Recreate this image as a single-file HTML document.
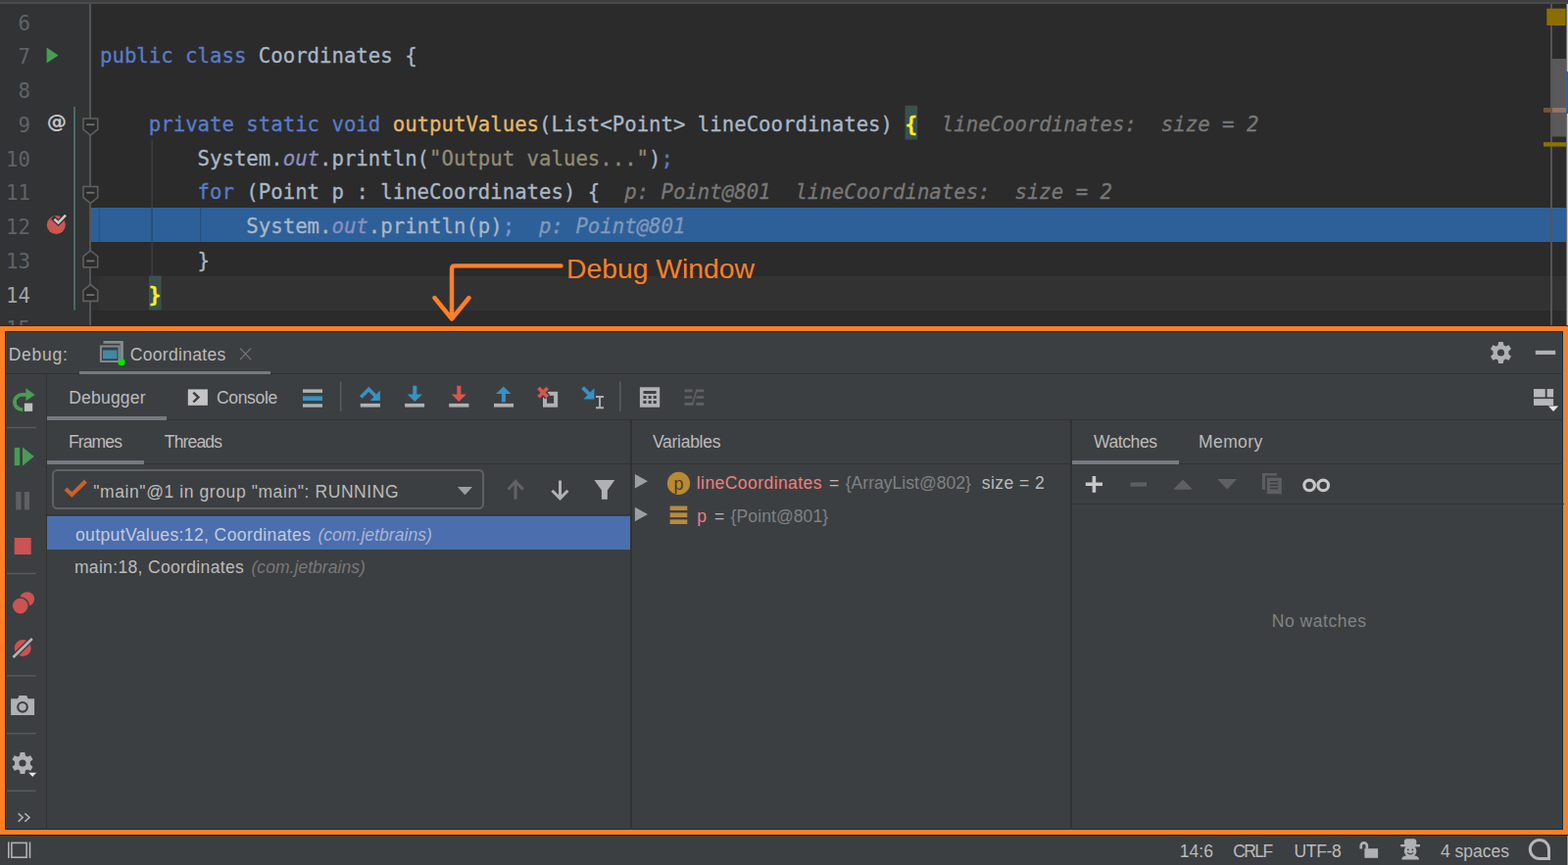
<!DOCTYPE html>
<html lang="en">
<head>
<meta charset="utf-8">
<title>Debug Window</title>
<style>
*{box-sizing:border-box;margin:0;padding:0}
html,body{width:1600px;height:883px;overflow:hidden;background:#2b2b2b}
body{position:relative;font-family:"Liberation Sans",sans-serif;color:#bbbbbb}
.abs{position:absolute}
/* ---------- editor ---------- */
#topstrip{left:0;top:0;width:1600px;height:4px;background:linear-gradient(#3c3f41 0,#3c3f41 2px,#4a4a4a 2px,#4a4a4a 4px)}
#gutter{left:0;top:4px;width:91px;height:330px;background:#313335}
#gutline{left:91px;top:4px;width:2px;height:330px;background:#555555}
.ln,.code{position:absolute;font-family:"DejaVu Sans Mono","Liberation Mono",monospace;font-size:20.68px;line-height:34.75px;height:34.75px;white-space:pre}
.ln.cur{color:#a4a3a3}
.ln{left:0;width:31px;margin-top:3px;text-align:right;color:#606366}
.code{left:102px;margin-top:2px;color:#a9b7c6;-webkit-text-stroke:0.3px}
.kw{color:#587ccb}
.fn{color:#e6b866}
.st{color:#8f8b74}
.fld{color:#8b8fc3;font-style:italic}
.hint{color:#787878;font-style:italic}
.kw2{color:#7a94d6}
.hint2{color:#8199ba;font-style:italic}
.brace{color:#ffef28;font-weight:bold}
#execline{left:93px;top:212px;width:1505px;height:35px;background:#2d6099}
#caretrow{left:93px;top:282px;width:1505.5px;height:35px;background:#323232}
#at{left:46px;top:110.6px;width:24px;text-align:center;font:bold 20.3px/26px "DejaVu Sans","Liberation Sans",sans-serif;color:#c3c5c7}
#annot{left:578px;top:258px;font:28.3px/32px "Liberation Sans",sans-serif;color:#ff7f27;white-space:pre}
/* ---------- debug panel ---------- */
#orange{left:0;top:333px;width:1600px;height:519px;border:5px solid #ff7f27;background:#3c3f41;box-shadow:0 0 0 0.9px #06303f,inset 0 0 0 0.9px #06303f}
#status{left:0;top:853px;width:1600px;height:30px;background:#3c3f41}
.ui{position:absolute;font-size:17.5px;line-height:22px;white-space:pre;color:#bbbbbb}
.hl{position:absolute;background:#323232}
.ul{position:absolute;background:#747a80}
</style>
</head>
<body>
<!-- editor -->
<div class="abs" id="topstrip"></div>
<div class="abs" id="gutter"></div>
<div class="abs" id="gutline"></div>
<div class="abs" id="execline"></div>
<div class="abs" id="caretrow"></div>
<svg class="abs" id="edsvg" style="left:0;top:0" width="1600" height="334" viewBox="0 0 1600 334">
<rect x="923.5" y="107.75" width="12.6" height="34.75" fill="#3b514d"/>
<rect x="152" y="281.5" width="12.6" height="35" fill="#3b514d"/>
<!-- indent guides -->
<rect x="154.5" y="142.5" width="1.2" height="139" fill="#424242"/>
<rect x="204" y="212" width="1.2" height="35" fill="#25507f"/>
<rect x="154.5" y="212" width="1.2" height="35" fill="#27517f"/>
<rect x="100.7" y="212" width="1.1" height="35" fill="#27548a"/>
<rect x="93" y="282" width="8" height="35" fill="#2f2f2f"/>
<!-- vcs line -->
<rect x="75" y="109" width="2" height="207.5" fill="#4c6a64"/>
<!-- run triangle -->
<path d="M47.6 48.6 L59.6 56.5 L47.6 64.4 Z" fill="#499c54"/>
<!-- breakpoint -->
<circle cx="57.3" cy="229.6" r="9.5" fill="#cd5651"/>
<path d="M55.4 223.6 L59.5 227.4 L67 219.7" fill="none" stroke="#2e3133" stroke-width="5" stroke-linecap="square"/>
<path d="M55.4 223.6 L59.5 227.4 L67 219.7" fill="none" stroke="#c9c9c9" stroke-width="2.6"/>
<!-- fold markers -->
<g fill="#2b2b2b" stroke="#606060" stroke-width="1.6">
<path d="M85 121 H99.7 V132 L92.35 138 L85 132 Z"/>
<path d="M85 190.5 H99.7 V201.5 L92.35 207.5 L85 201.5 Z"/>
<path d="M85 272.7 H99.7 V261.7 L92.35 255.9 L85 261.7 Z"/>
<path d="M85 307.4 H99.7 V296.4 L92.35 290.6 L85 296.4 Z"/>
</g>
<g fill="#707070">
<rect x="88.2" y="126.3" width="8.2" height="1.8"/>
<rect x="88.2" y="195.8" width="8.2" height="1.8"/>
<rect x="88.2" y="265.5" width="8.2" height="1.8"/>
<rect x="88.2" y="300.2" width="8.2" height="1.8"/>
</g>
<!-- scrollbar -->
<rect x="1582" y="4" width="2" height="330" fill="#555555"/>
<rect x="1584" y="60" width="14" height="79.5" fill="#595959"/>
<rect x="1578.3" y="8.7" width="19.2" height="17.3" fill="#8a6f00"/>
<rect x="1575" y="110" width="9" height="4.8" fill="#7a4f3b"/>
<rect x="1584" y="110" width="14" height="4.8" fill="#907568"/>
<rect x="1575" y="145.2" width="23" height="4.4" fill="#8a7300"/>
<rect x="1598.6" y="4" width="1.4" height="330" fill="#c9ccce"/>
<rect x="1598.3" y="73" width="1.7" height="43" fill="#2b5db5"/>
<!-- annotation arrow -->
<path d="M572.5 271.4 H464 Q461 271.4 461 274.4 V325.5 M443.5 304 L461 325.5 L478.5 304" fill="none" stroke="#ff7f27" stroke-width="4.4" stroke-linecap="round" stroke-linejoin="round"/>
</svg>
<div class="abs" id="at">@</div>
<div class="abs" id="annot">Debug Window</div>
<div id="lines">
<div class="ln" style="top:3.5px">6</div>
<div class="ln" style="top:38.25px">7</div>
<div class="ln" style="top:73.0px">8</div>
<div class="ln" style="top:107.75px">9</div>
<div class="ln" style="top:142.5px">10</div>
<div class="ln" style="top:177.25px">11</div>
<div class="ln" style="top:212.0px">12</div>
<div class="ln" style="top:246.75px">13</div>
<div class="ln cur" style="top:281.5px">14</div>
<div class="ln" style="top:316.25px">15</div>
<div class="code" style="top:38.25px"><span class="kw">public class</span> Coordinates {</div>
<div class="code" style="top:107.75px">    <span class="kw">private static void</span> <span class="fn">outputValues</span>(List&lt;Point&gt; lineCoordinates) <span class="brace">{</span><span class="hint">  lineCoordinates:  size = 2</span></div>
<div class="code" style="top:142.5px">        System.<span class="fld">out</span>.println(<span class="st">"Output values..."</span>)<span class="kw">;</span></div>
<div class="code" style="top:177.25px">        <span class="kw">for</span> (Point p : lineCoordinates) {<span class="hint">  p: Point@801  lineCoordinates:  size = 2</span></div>
<div class="code" style="top:212.0px">            System.<span class="fld">out</span>.println(p)<span class="kw2">;</span><span class="hint2">  p: Point@801</span></div>
<div class="code" style="top:246.75px">        }</div>
<div class="code" style="top:281.5px">    <span class="brace">}</span></div>
</div>
<!-- debug -->
<div class="abs" id="orange"></div>
<div class="abs" id="status"></div>
<!-- PANEL -->
<!-- panel lines -->
<div class="hl" style="left:5px;top:381px;width:1590px;height:1px"></div>
<div class="hl" style="left:48px;top:428px;width:1547px;height:1px"></div>
<div class="hl" style="left:47px;top:382px;width:1px;height:465px"></div>
<div class="hl" style="left:48px;top:473px;width:1547px;height:1px"></div>
<div class="hl" style="left:642.8px;top:429px;width:1.8px;height:418px"></div>
<div class="hl" style="left:1091.9px;top:429px;width:1.8px;height:418px"></div>
<div class="hl" style="left:48px;top:524.5px;width:595px;height:1.5px"></div>
<div class="hl" style="left:1093.5px;top:513.6px;width:502px;height:1.6px"></div>
<!-- tab underlines -->
<div class="ul" style="left:81px;top:378.5px;width:195px;height:3.8px"></div>
<div class="ul" style="left:48px;top:425px;width:122px;height:3.9px"></div>
<div class="ul" style="left:48px;top:469.8px;width:99.2px;height:3.9px"></div>
<div class="ul" style="left:1093.5px;top:469.8px;width:109.3px;height:3.9px"></div>
<!-- selected frame row -->
<div class="abs" style="left:48px;top:527px;width:595px;height:34px;background:#4b6eaf"></div>
<!-- thread combo -->
<div class="abs" style="left:53.1px;top:479.4px;width:440.8px;height:40.4px;border:2px solid #5f6163;border-radius:5.5px"></div>
<svg class="abs" style="left:0;top:334px" width="1600" height="549" viewBox="0 334 1600 549">
<!-- header: run config icon -->
<g>
<path d="M105.5 352.5 V348.1 H125.9 V366.2 H122.5 V350.7 H105.5 Z" fill="#7f8b91"/>
<rect x="102.9" y="353.5" width="18.6" height="15.5" fill="#3c3f41" stroke="#7f8b91" stroke-width="2"/>
<rect x="105" y="357.5" width="14.4" height="8.8" fill="#3e89a6"/>
<circle cx="124" cy="369.7" r="3.6" fill="#00e600"/>
<path d="M245 355.5 L256 367 M256 355.5 L245 367" stroke="#6e7072" stroke-width="1.3" fill="none"/>
</g>
<!-- header right: gear, minus -->
<g fill="#afb1b3">
<path id="gear" transform="translate(1531.5 360)" d="M-2.3 -11 H2.3 L3 -7.6 L4.9 -6.6 L8.2 -7.8 L10.5 -3.8 L7.9 -1.5 V1.5 L10.5 3.8 L8.2 7.8 L4.9 6.6 L3 7.6 L2.3 11 H-2.3 L-3 7.6 L-4.9 6.6 L-8.2 7.8 L-10.5 3.8 L-7.9 1.5 V-1.5 L-10.5 -3.8 L-8.2 -7.8 L-4.9 -6.6 L-3 -7.6 Z M0 -3.6 A3.6 3.6 0 1 0 0 3.6 A3.6 3.6 0 1 0 0 -3.6 Z" fill-rule="evenodd"/>
<rect x="1566.8" y="357.8" width="20.4" height="4.1"/>
</g>
<!-- restore layout icon -->
<g fill="#b6b8ba">
<rect x="1565" y="397.1" width="11.7" height="8.3"/>
<rect x="1578.7" y="397.1" width="6.4" height="8.3"/>
<rect x="1565" y="407.1" width="20.1" height="6.8"/>
<path d="M1580 414.6 H1590.2 L1585.1 420 Z" fill="#e6e6e6"/>
</g>
<!-- console icon -->
<rect x="191.8" y="397.4" width="20.1" height="16.4" fill="#c4c4c4"/>
<path d="M197.3 400.7 L202.4 405.6 L197.3 410.5" fill="none" stroke="#3c3f41" stroke-width="2.4"/>
<!-- layout bars -->
<rect x="309" y="397.4" width="20" height="3.5" fill="#afb1b3"/>
<rect x="309" y="404.4" width="20" height="4.6" fill="#3592c4"/>
<rect x="309" y="412.3" width="20" height="3.4" fill="#afb1b3"/>
<!-- separators -->
<rect x="346.9" y="389.4" width="1.5" height="30.4" fill="#5a5d5f"/>
<rect x="632" y="389.4" width="1.5" height="30.4" fill="#5a5d5f"/>
<!-- step over -->
<rect x="367.7" y="411.9" width="20.2" height="3.7" fill="#afb1b3"/>
<path d="M368.2 405.5 L376.3 397.4 L383.5 404.6" fill="none" stroke="#3592c4" stroke-width="3.6"/>
<path d="M387.9 398.5 V409 H377.7 Z" fill="#3592c4"/>
<!-- step into -->
<rect x="413.1" y="411.9" width="20" height="3.7" fill="#afb1b3"/>
<path d="M421.25 393.7 H425.25 V402.5 H430.9 L423.25 410 L415.6 402.5 H421.25 Z" fill="#3592c4"/>
<!-- force step into -->
<rect x="458.2" y="411.9" width="20.2" height="3.7" fill="#afb1b3"/>
<path d="M466.3 393.7 H470.3 V402.5 H475.9 L468.3 410 L460.7 402.5 H466.3 Z" fill="#d9554f"/>
<!-- step out -->
<rect x="504" y="411.9" width="20" height="3.7" fill="#afb1b3"/>
<path d="M513.75 394.4 L521.4 401.9 H515.9 V410.6 H511.9 V401.9 H506.1 Z" fill="#3592c4"/>
<!-- drop frame -->
<rect x="556" y="401.8" width="11.1" height="11.9" fill="none" stroke="#afb1b3" stroke-width="4"/>
<path d="M549.5 396 L558.7 405.3 M558.7 396 L549.5 405.3" stroke="#3c3f41" stroke-width="6.6" fill="none"/>
<path d="M549.5 396 L558.7 405.3 M558.7 396 L549.5 405.3" stroke="#d9554f" stroke-width="3.7" fill="none"/>
<!-- run to cursor -->
<path d="M594.6 395.7 L602.5 403.6" stroke="#3592c4" stroke-width="3.9" fill="none"/>
<path d="M606.4 396.3 V407.4 H595.4 Z" fill="#3592c4"/>
<path d="M608 405 H616 M608 416.2 H616 M612 405 V416.2" stroke="#afb1b3" stroke-width="1.9" fill="none"/>
<!-- evaluate (calculator) -->
<path fill="#afb1b3" fill-rule="evenodd" d="M652.9 395.2 H673.2 V415.7 H652.9 Z M656.5 399.1 V402 H669.6 V399.1 Z M656.4 404.1 V406.90000000000003 H659.5 V404.1 Z M656.4 409.1 V411.90000000000003 H659.5 V409.1 Z M661.6 404.1 V406.90000000000003 H664.7 V404.1 Z M661.6 409.1 V411.90000000000003 H664.7 V409.1 Z M666.7 404.1 V406.90000000000003 H669.8000000000001 V404.1 Z M666.7 409.1 V411.90000000000003 H669.8000000000001 V409.1 Z"/>
<!-- trace (disabled) -->
<g fill="#5e6062">
<rect x="698.5" y="397.5" width="8.2" height="2.8"/><rect x="698.5" y="404.2" width="7.6" height="2.6"/><rect x="698.5" y="410.9" width="8.4" height="3"/>
<rect x="710.6" y="397.5" width="7.6" height="2.8"/><rect x="710.6" y="404.2" width="7.6" height="2.6"/><rect x="710.3" y="410.9" width="7.9" height="3"/>
<path d="M705.4 413.9 L710.2 397.5 H711.9 L707.1 413.9 Z"/>
</g>
<!-- left toolbar -->
<g fill="#585a5c">
<rect x="7" y="435.8" width="30" height="1.4"/>
<rect x="7" y="584.8" width="30" height="1.4"/>
<rect x="7" y="689.2" width="30" height="1.4"/>
<rect x="7" y="748" width="30" height="1.4"/>
<rect x="7" y="806.6" width="30" height="1.4"/>
</g>
<!-- rerun -->
<path d="M23.2 418.2 H22.5 A7.65 7.65 0 0 1 22.5 402.9 H27" fill="none" stroke="#499c54" stroke-width="3.8"/>
<path d="M26.4 396.3 V409.3 L35.7 403 Z" fill="#499c54"/>
<rect x="24.9" y="411.6" width="8.3" height="8.3" fill="#bdbdbd"/>
<!-- resume -->
<rect x="14.7" y="456.9" width="5.5" height="18.3" fill="#499c54"/>
<path d="M23 456.5 L34.8 466 L23 475.6 Z" fill="#499c54"/>
<!-- pause (disabled) -->
<rect x="16.2" y="502" width="5.3" height="18.4" fill="#5e6062"/>
<rect x="24.9" y="502" width="5.1" height="18.4" fill="#5e6062"/>
<!-- stop -->
<rect x="14.7" y="549" width="17" height="17" fill="#cb5351"/>
<!-- view breakpoints -->
<circle cx="27.7" cy="611.6" r="7.4" fill="#cb5351"/>
<circle cx="20.7" cy="618.6" r="9.4" fill="#3c3f41"/>
<circle cx="20.7" cy="618.6" r="7.8" fill="#cb5351"/>
<!-- mute breakpoints -->
<circle cx="23.2" cy="661.4" r="8.5" fill="#cb5351"/>
<path d="M13.4 671 L32.8 652" stroke="#3c3f41" stroke-width="5.4"/>
<path d="M13.4 671 L32.8 652" stroke="#b4b4b4" stroke-width="2.6"/>
<!-- camera -->
<path fill="#afb1b3" fill-rule="evenodd" d="M11.1 713.3 H18.2 L19.6 710.1 H27.2 L28.6 713.3 H35.1 V730 H11.1 Z M23 715.9 A5.9 5.9 0 1 0 23 727.7 A5.9 5.9 0 1 0 23 715.9 Z"/>
<circle cx="23" cy="721.8" r="3.7" fill="#afb1b3"/>
<!-- settings gear -->
<use href="#gear" transform="translate(-1508.5 419)" fill="#afb1b3"/>
<path d="M28.5 788.3 H37.9 L33.2 793.4 Z" fill="#e6e6e6" stroke="#3c3f41" stroke-width="0.8"/>
<!-- >> -->
<path d="M18.6 830.4 L23.2 834.5 L18.6 838.6 M25.4 830.4 L30 834.5 L25.4 838.6" fill="none" stroke="#afb1b3" stroke-width="1.6"/>
<!-- thread check + combo arrow + frame nav -->
<path d="M67 498.9 L73.4 505 L87.4 491.2" fill="none" stroke="#c9622b" stroke-width="4.1" stroke-miterlimit="10"/>
<path d="M466.9 497 H482 L474.45 505.2 Z" fill="#9da0a3"/>
<path d="M526 509.8 V491.5 M518.5 499.6 L526 491.5 L533.8 499.6" fill="none" stroke="#606264" stroke-width="3"/>
<path d="M571.5 490.5 V508.8 M563.4 500.8 L571.5 508.9 L579.4 500.8" fill="none" stroke="#afb1b3" stroke-width="3"/>
<path d="M606.4 490.1 H627.3 L619.8 500.5 V509.8 H613.9 V500.5 Z" fill="#afb1b3"/>
<!-- variables tree -->
<path d="M647.9 484 L661 491.3 L647.9 498.5 Z" fill="#9da0a2"/>
<path d="M647.9 517.8 L661 525 L647.9 532.3 Z" fill="#9da0a2"/>
<circle cx="692.5" cy="493.4" r="11.6" fill="#b98a34"/>
<rect x="683.7" y="516.5" width="17.6" height="4.5" fill="#b98a3a"/>
<rect x="683.7" y="523.4" width="17.6" height="4.7" fill="#b98a3a"/>
<rect x="683.7" y="530.4" width="17.6" height="4.6" fill="#b98a3a"/>
<!-- watches toolbar -->
<path d="M1107.8 494.3 H1125 M1116.4 485.9 V502.8" stroke="#c8c8c8" stroke-width="3.6" fill="none"/>
<rect x="1153.5" y="492.4" width="16.5" height="4.2" fill="#5e6062"/>
<path d="M1197.2 499.8 L1207 489.6 L1216.9 499.8 Z" fill="#5e6062"/>
<path d="M1242.2 489 H1262.3 L1252.2 499.4 Z" fill="#5e6062"/>
<path d="M1287.9 482.9 H1302.9 V485.6 H1291 V499.7 H1287.9 Z" fill="#5c5e60"/>
<path fill="#5c5e60" fill-rule="evenodd" d="M1292.8 487.8 H1307.8 V504.2 H1292.8 Z M1296 491 V492.5 H1304.2 V491 Z M1296 494.4 V495.9 H1304.2 V494.4 Z M1296 497.8 V499.3 H1304.2 V497.8 Z"/>
<g fill="none" stroke="#c8c8c8" stroke-width="3.1">
<ellipse cx="1336.1" cy="495.4" rx="5.3" ry="5.3"/>
<ellipse cx="1350.2" cy="495.4" rx="5.3" ry="5.3"/>
</g>
<!-- status bar icons -->
<g fill="none" stroke="#afb1b3" stroke-width="1.6">
<path d="M8.8 859.6 V876 M30.5 859.6 V876"/>
<rect x="11.9" y="860.4" width="15.2" height="14.8"/>
</g>
<!-- status: lock, hector, bubble -->
<rect x="1392.4" y="866.2" width="13.7" height="9.6" fill="#afb1b3"/>
<path d="M1388.8 866.5 V863.3 A3 3 0 0 1 1394.8 863.3 V866.5" fill="none" stroke="#afb1b3" stroke-width="2.7"/>
<g fill="#afb1b3">
<rect x="1429.2" y="862" width="19.8" height="2.4"/>
<path d="M1432.9 862.2 V859 Q1432.9 856.2 1435.7 856.2 H1442.5 Q1445.3 856.2 1445.3 859 V862.2 Z"/>
<circle cx="1439.1" cy="868.8" r="6.3"/>
<path d="M1430.2 877.5 Q1430.6 874 1434.5 873.6 H1443.7 Q1447.6 874 1448 877.5 Z"/>
</g>
<circle cx="1436.8" cy="867.4" r="0.9" fill="#3c3f41"/><circle cx="1441.4" cy="867.4" r="0.9" fill="#3c3f41"/>
<path d="M1436 870.3 Q1439.1 873.3 1442.2 870.3" fill="none" stroke="#3c3f41" stroke-width="1.1"/>
<path d="M1580.5 867 A9.6 9.6 0 1 0 1570.9 876.6 H1580.5 Z" fill="none" stroke="#b4b6b8" stroke-width="3"/>
<rect x="1598.3" y="853" width="0.9" height="30" fill="#2f3133"/><rect x="1599.2" y="853" width="0.8" height="30" fill="#a8a8a8"/>
</svg>
<div class="abs" style="left:682.6px;top:482.6px;width:20px;text-align:center;font:18px/22px 'Liberation Sans',sans-serif;color:#4a3b18">p</div>

<div class="ui" style="left:8.75px;top:350.90px;color:#bbbbbb;letter-spacing:0.736px">Debug:</div>
<div class="ui" style="left:132.75px;top:350.90px;color:#bbbbbb;letter-spacing:0.324px">Coordinates</div>
<div class="ui" style="left:70.25px;top:394.80px;color:#bbbbbb;letter-spacing:0.209px">Debugger</div>
<div class="ui" style="left:220.90px;top:394.80px;color:#bbbbbb;letter-spacing:-0.296px">Console</div>
<div class="ui" style="left:69.90px;top:439.70px;color:#bbbbbb;letter-spacing:-0.842px">Frames</div>
<div class="ui" style="left:167.80px;top:439.70px;color:#bbbbbb;letter-spacing:-0.833px">Threads</div>
<div class="ui" style="left:95.25px;top:490.70px;color:#bbbbbb;letter-spacing:0.588px">"main"@1 in group "main": RUNNING</div>
<div class="ui" style="left:76.90px;top:534.80px;color:#c3cbdb;letter-spacing:0.401px">outputValues:12, Coordinates</div>
<div class="ui" style="left:324.40px;top:534.80px;color:#a9b5cf;letter-spacing:0.050px;font-style:italic">(com.jetbrains)</div>
<div class="ui" style="left:75.90px;top:567.60px;color:#bbbbbb;letter-spacing:0.342px">main:18, Coordinates</div>
<div class="ui" style="left:256.50px;top:567.60px;color:#787878;letter-spacing:0.043px;font-style:italic">(com.jetbrains)</div>
<div class="ui" style="left:665.90px;top:439.70px;color:#bbbbbb;letter-spacing:-0.263px">Variables</div>
<div class="ui" style="left:710.80px;top:482.30px;color:#f0807c;letter-spacing:0.436px">lineCoordinates</div>
<div class="ui" style="left:845.90px;top:482.30px;color:#bbbbbb;letter-spacing:-0.300px">=</div>
<div class="ui" style="left:862.75px;top:482.30px;color:#7f8283;letter-spacing:0.029px">{ArrayList@802}</div>
<div class="ui" style="left:1001.70px;top:482.30px;color:#bbbbbb;letter-spacing:0.462px">size = 2</div>
<div class="ui" style="left:711.20px;top:515.70px;color:#f0807c;letter-spacing:1.400px">p</div>
<div class="ui" style="left:729.00px;top:515.70px;color:#bbbbbb;letter-spacing:-1.000px">=</div>
<div class="ui" style="left:745.60px;top:515.70px;color:#7f8283;letter-spacing:0.100px">{Point@801}</div>
<div class="ui" style="left:1116.00px;top:439.70px;color:#bbbbbb;letter-spacing:-0.405px">Watches</div>
<div class="ui" style="left:1223.00px;top:439.70px;color:#bbbbbb;letter-spacing:0.410px">Memory</div>
<div class="ui" style="left:1297.80px;top:623.30px;color:#808385;letter-spacing:0.524px">No watches</div>
<div class="ui" style="left:1203.80px;top:858.40px;color:#bbbbbb;letter-spacing:0.024px">14:6</div>
<div class="ui" style="left:1258.30px;top:858.40px;color:#bbbbbb;letter-spacing:-1.603px">CRLF</div>
<div class="ui" style="left:1320.50px;top:858.40px;color:#bbbbbb;letter-spacing:-0.336px">UTF-8</div>
<div class="ui" style="left:1470.00px;top:858.40px;color:#bbbbbb;letter-spacing:0.001px">4 spaces</div>
<!-- /PANEL -->
</body>
</html>
